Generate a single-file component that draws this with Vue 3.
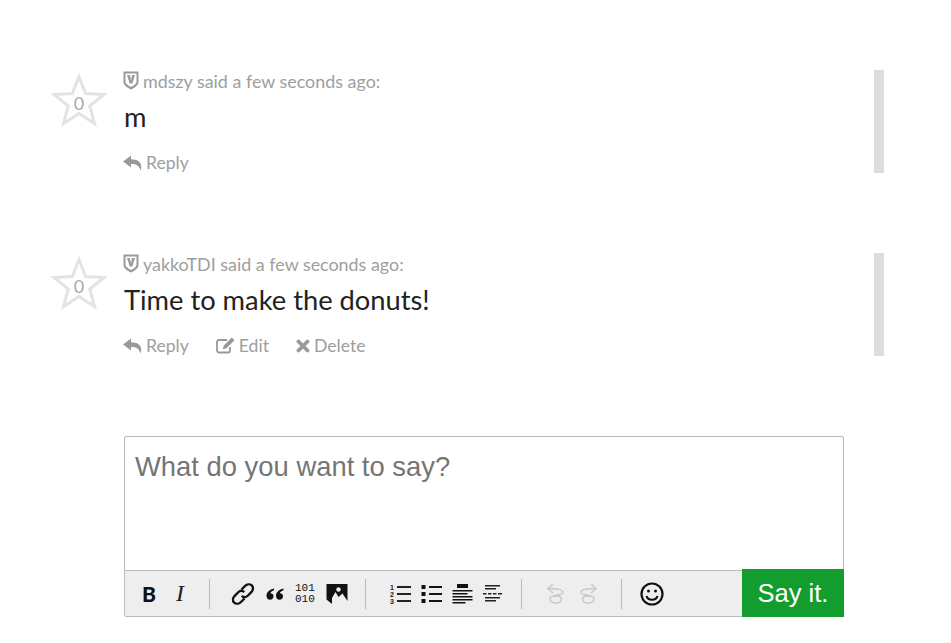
<template>
  <div class="page">
    <div v-for="c in comments" :key="c.user" class="comment">
      <div class="vote">
        <svg class="star" width="56" height="54" viewBox="0 0 56 54">
          <path d="M28 3.500 L34.600 20.600 L53 21.500 L38.700 33 L43.500 50.600 L28 40.600 L12.500 50.600 L17.300 33 L3 21.500 L21.400 20.600 Z" fill="none" stroke="#e3e3e3" stroke-width="3" />
        </svg>
        <span class="score">0</span>
      </div>
      <div class="body">
        <div class="byline">
          <svg class="shield" width="16" height="19" viewBox="0 0 16 19">
            <path d="M0.500 0.500 H15.500 V11 C15.500 14.500 11 17 8 18.500 C5 17 0.500 14.500 0.500 11 Z" fill="#9a9a9a" />
            <path d="M2.500 2.500 H13.500 V10.500 C13.500 13 10 15 8 16 C6 15 2.500 13 2.500 10.500 Z" fill="#fff" />
            <path d="M4 4 H7 L8 9.500 L9 4 H12 L9.300 12.500 H6.700 Z" fill="#9a9a9a" />
          </svg>
          <span>{{ c.user }} said a few seconds ago:</span>
        </div>
        <p class="text">{{ c.text }}</p>
        <div class="actions">
          <a class="action">
            <svg width="19" height="16" viewBox="0 0 19 16"><path d="M8 0.500 L0 6.500 L8 12.500 V9 C13 8.800 16 10.500 17.500 15.500 C20 8.500 16 4.200 8 4.200 Z" fill="#999" /></svg>
            Reply
          </a>
          <a v-if="c.own" class="action">
            <svg width="19" height="17" viewBox="0 0 19 17">
              <path d="M14 10 V13.500 A2 2 0 0 1 12 15.500 H3 A2 2 0 0 1 1 13.500 V5 A2 2 0 0 1 3 3 H11" fill="none" stroke="#999" stroke-width="1.800" />
              <path d="M15.800 0.500 L18.500 3.200 L10.500 11.200 L6.800 12.200 L7.800 8.500 Z" fill="#999" />
            </svg>
            Edit
          </a>
          <a v-if="c.own" class="action">
            <svg width="14" height="14" viewBox="0 0 14 14"><path d="M2.500 2.500 L11.500 11.500 M11.500 2.500 L2.500 11.500" stroke="#999" stroke-width="3.800" stroke-linecap="round" /></svg>
            Delete
          </a>
        </div>
      </div>
      <div class="bar"></div>
    </div>

    <form class="editor" @submit.prevent>
      <div class="input">What do you want to say?</div>
      <div class="toolbar">
        <div class="tools">
          <div class="group first">
            <span class="bold">B</span>
            <span class="italic">I</span>
          </div>
          <div class="group second">
            <svg width="24" height="24" viewBox="0 0 24 24" fill="none" stroke="#111" stroke-width="2.400">
              <path d="M10.500 7.500 L14 4 C16 2 19 1.800 20.800 3.400 C22.600 5.200 22.300 8.200 20.300 10.200 L17 13.500 C15 15.400 12.500 15.500 10.800 13.800" />
              <path d="M13.500 16.500 L10 20 C8 22 5 22.200 3.200 20.600 C1.400 18.800 1.700 15.800 3.700 13.800 L7 10.500 C9 8.600 11.500 8.500 13.200 10.200" />
            </svg>
            <svg width="18" height="12" viewBox="0 0 18 12" fill="#111">
              <path d="M8 0.500 C3.500 1.500 0.500 4 0.500 8 C0.500 10.300 2 11.700 4 11.700 C6 11.700 7.500 10.300 7.500 8.300 C7.500 6.500 6.200 5.200 4.300 5.300 C4.800 3.800 6.200 2.800 8 2.300 Z" />
              <path d="M17.500 0.500 C13 1.500 10 4 10 8 C10 10.300 11.500 11.700 13.500 11.700 C15.500 11.700 17 10.300 17 8.300 C17 6.500 15.700 5.200 13.800 5.300 C14.300 3.800 15.700 2.800 17.500 2.300 Z" />
            </svg>
            <span class="binary">101<br />010</span>
            <svg width="22" height="20" viewBox="0 0 22 20">
              <path d="M0.500 0 H21.500 V17 L16.500 9.500 L12.500 13 L9.500 8 L6 14 V20 L0.500 15.500 Z" fill="#111" />
              <circle cx="12.500" cy="5.500" r="2.200" fill="#eee" />
            </svg>
          </div>
          <div class="group third">
            <svg width="21" height="20" viewBox="0 0 21 20" fill="#222">
              <text x="0" y="6" class="num">1</text><text x="0" y="13" class="num">2</text><text x="0" y="20" class="num">3</text>
              <rect x="7" y="2" width="14" height="2" /><rect x="7" y="9" width="14" height="2" /><rect x="7" y="16" width="14" height="2" />
            </svg>
            <svg width="21" height="20" viewBox="0 0 21 20" fill="#111">
              <rect x="0.500" y="1" width="4" height="4" /><rect x="0.500" y="8" width="4" height="4" /><rect x="0.500" y="15" width="4" height="4" />
              <rect x="8" y="2" width="13" height="2" /><rect x="8" y="9" width="13" height="2" /><rect x="8" y="16" width="13" height="2" />
            </svg>
            <svg width="21" height="20" viewBox="0 0 21 20" fill="#111">
              <rect x="5" y="0" width="11" height="4" />
              <rect x="0.500" y="6" width="20" height="1.500" /><rect x="0.500" y="9" width="15" height="1.500" /><rect x="0.500" y="12" width="20" height="1.500" /><rect x="0.500" y="15" width="20" height="1.500" /><rect x="0.500" y="18" width="13" height="1.500" />
            </svg>
            <svg width="20" height="20" viewBox="0 0 20 20" fill="#222">
              <rect x="2" y="1" width="15" height="1.500" /><rect x="2" y="4" width="11" height="1.500" />
              <path d="M0 9 H3.500 V10.500 H0 Z M5 9 H8.500 V10.500 H5 Z M10 9 H13.500 V10.500 H10 Z M15 9 H19 V10.500 H15 Z" />
              <rect x="2" y="13" width="15" height="1.500" /><rect x="2" y="16" width="11" height="1.500" />
            </svg>
          </div>
          <div class="group fourth">
            <svg width="20" height="22" viewBox="0 0 20 22" fill="none" stroke="#c9c9c9" stroke-width="1.600">
              <path d="M7 1 L2 5.500 L7 10" />
              <path d="M2 5.500 C10 5.500 17 6 17 9.500 C17 13 4 11 4 15.500 C4 21 15 22 15.500 16 C15.500 13 11 12.500 8 13.500" />
            </svg>
            <svg width="20" height="22" viewBox="0 0 20 22" fill="none" stroke="#c9c9c9" stroke-width="1.600">
              <path d="M13 1 L18 5.500 L13 10" />
              <path d="M18 5.500 C10 5.500 3 6 3 9.500 C3 13 16 11 16 15.500 C16 21 5 22 4.500 16 C4.500 13 9 12.500 12 13.500" />
            </svg>
          </div>
          <div class="group fifth">
            <svg width="24" height="24" viewBox="0 0 24 24" fill="none" stroke="#111" stroke-width="2.200">
              <circle cx="12" cy="12" r="10.500" />
              <path d="M6.500 14 C8 19 16 19 17.500 14" />
              <circle cx="8.500" cy="9" r="1.500" fill="#111" stroke="none" />
              <circle cx="15.500" cy="9" r="1.500" fill="#111" stroke="none" />
            </svg>
          </div>
        </div>
        <button class="send" type="submit">Say it.</button>
      </div>
    </form>
  </div>
</template>

<script setup>
const comments = [
  { user: 'mdszy', text: 'm', own: false },
  { user: 'yakkoTDI', text: 'Time to make the donuts!', own: true },
]
</script>

<style>
body {
  background: #fff;
}
</style>

<style scoped>
.page {
  width: 951px;
  height: 643px;
  overflow: hidden;
  padding: 70px 0 0 52px;
  box-sizing: border-box;
  font-family: Lato, "Open Sans", sans-serif;
}

.comment {
  display: flex;
  height: 103px;
  margin-bottom: 80px;
}

.vote {
  position: relative;
  width: 72px;
  flex: none;
}

.star {
  display: block;
  margin-top: 3px;
  margin-left: -1px;
}

.score {
  position: absolute;
  left: 0;
  top: 22px;
  width: 54px;
  text-align: center;
  font-size: 18px;
  color: #aaa;
}

.body {
  flex: none;
  width: 750px;
}

.byline {
  display: flex;
  align-items: center;
  gap: 4px;
  height: 21px;
  margin-left: -1px;
  font-size: 17.9px;
  color: #9e9e9e;
}

.text {
  margin: 0;
  padding-top: 8px;
  height: 37px;
  line-height: 36px;
  font-size: 27.3px;
  color: #222;
}

.actions {
  display: flex;
  gap: 27px;
  margin-top: 16px;
  margin-left: -1px;
}

.action {
  display: flex;
  align-items: center;
  gap: 4px;
  font-size: 17.6px;
  color: #9e9e9e;
}

.bar {
  width: 10px;
  height: 103px;
  background: #ddd;
  flex: none;
}

.editor {
  width: 720px;
  height: 181px;
  margin: 0 0 0 72px;
  box-sizing: border-box;
  border: 1px solid #bbb;
  border-radius: 2px;
  display: flex;
  flex-direction: column;
}

.input {
  flex: 1;
  padding: 14px 10px;
  font-family: "Liberation Sans", Arial, sans-serif;
  font-size: 27.4px;
  line-height: 32px;
  color: #757575;
}

.toolbar {
  display: flex;
  justify-content: space-between;
  height: 46px;
  background: #eee;
  border-top: 1px solid #bbb;
  box-sizing: border-box;
}

.tools {
  display: flex;
  align-items: center;
}

.group {
  display: flex;
  align-items: center;
  height: 30px;
  box-sizing: border-box;
  border-right: 1px solid #bbb;
}

.first {
  width: 85px;
  padding-left: 17px;
  gap: 20px;
}

.second {
  width: 156px;
  padding-left: 21px;
  gap: 11px;
}

.third {
  width: 156px;
  padding-left: 24px;
  gap: 10px;
}

.fourth {
  width: 100px;
  padding-left: 24px;
  gap: 12px;
}

.fifth {
  border-right: 0;
  padding-left: 18px;
}

.bold {
  font-family: Lato, sans-serif;
  font-weight: 900;
  font-size: 21px;
  color: #111;
}

.italic {
  font-family: "Liberation Serif", serif;
  font-style: italic;
  font-size: 24px;
  color: #222;
}

.binary {
  font-family: "Liberation Mono", monospace;
  font-size: 11px;
  line-height: 11px;
  color: #111;
}

.num {
  font-family: "Liberation Sans", sans-serif;
  font-size: 7px;
  font-weight: 700;
}

.send {
  width: 102px;
  height: 48px;
  margin: -2px -1px 0 0;
  border: 0;
  background: #139d2e;
  color: #fff;
  font-family: "Liberation Sans", Arial, sans-serif;
  font-size: 25.5px;
  padding: 0;
}
</style>
